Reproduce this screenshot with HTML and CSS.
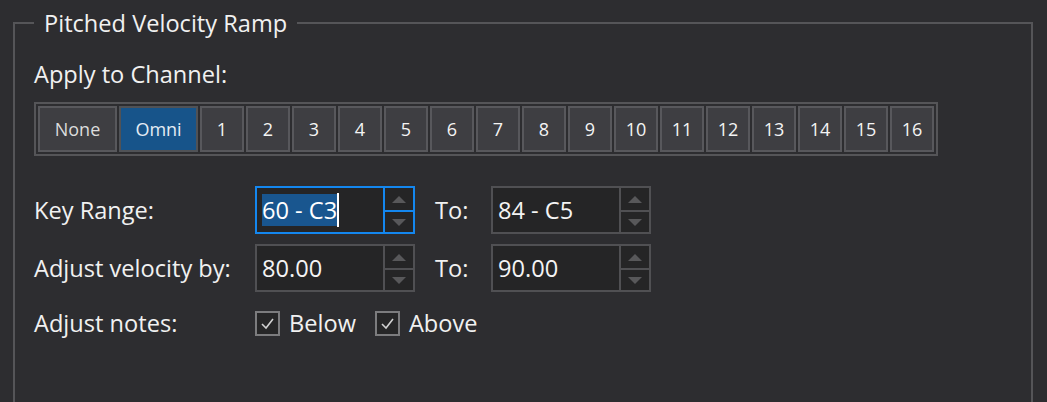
FILE: index.html
```html
<!DOCTYPE html>
<html lang="en">
<head>
<meta charset="utf-8">
<title>Pitched Velocity Ramp</title>
<link rel="stylesheet" href="styles.css">
</head>
<body>
<fieldset class="group">
  <legend class="group-title">Pitched Velocity Ramp</legend>
  <div class="section-label">Apply to Channel:</div>
  <div class="channels">
    <div class="ch ch-wide">None</div>
    <div class="ch ch-wide ch-active">Omni</div>
    <div class="ch">1</div>
    <div class="ch">2</div>
    <div class="ch">3</div>
    <div class="ch">4</div>
    <div class="ch">5</div>
    <div class="ch">6</div>
    <div class="ch">7</div>
    <div class="ch">8</div>
    <div class="ch">9</div>
    <div class="ch">10</div>
    <div class="ch">11</div>
    <div class="ch">12</div>
    <div class="ch">13</div>
    <div class="ch">14</div>
    <div class="ch">15</div>
    <div class="ch">16</div>
  </div>
  <div class="form">
    <div class="form-label">Key Range:</div>
    <div class="spin spin-focus">
      <div class="spin-value"><span class="sel">60 - C3</span><span class="caret"></span></div>
      <div class="spin-btns"><div class="spin-up"><span class="arrow-up"></span></div><div class="spin-down"><span class="arrow-down"></span></div></div>
    </div>
    <div class="to-label">To:</div>
    <div class="spin">
      <div class="spin-value">84 - C5</div>
      <div class="spin-btns"><div class="spin-up"><span class="arrow-up"></span></div><div class="spin-down"><span class="arrow-down"></span></div></div>
    </div>

    <div class="form-label">Adjust velocity by:</div>
    <div class="spin">
      <div class="spin-value">80.00</div>
      <div class="spin-btns"><div class="spin-up"><span class="arrow-up"></span></div><div class="spin-down"><span class="arrow-down"></span></div></div>
    </div>
    <div class="to-label">To:</div>
    <div class="spin">
      <div class="spin-value">90.00</div>
      <div class="spin-btns"><div class="spin-up"><span class="arrow-up"></span></div><div class="spin-down"><span class="arrow-down"></span></div></div>
    </div>

    <div class="form-label">Adjust notes:</div>
    <div class="checks">
      <label class="check">
        <span class="box"><svg width="21" height="21" viewBox="0 0 21 21"><polyline points="5,11 9,15 16,6" fill="none" stroke="#d0d0d0" stroke-width="1.6"/></svg></span>
        <span class="check-text">Below</span>
      </label>
      <label class="check">
        <span class="box"><svg width="21" height="21" viewBox="0 0 21 21"><polyline points="5,11 9,15 16,6" fill="none" stroke="#d0d0d0" stroke-width="1.6"/></svg></span>
        <span class="check-text">Above</span>
      </label>
    </div>
  </div>
</fieldset>
</body>
</html>
```

FILE: styles.css
```css
html, body {
  margin: 0;
  padding: 0;
  background: #2d2d30;
  overflow: hidden;
  height: 402px;
}

body {
  font-family: "Open Sans", "Noto Sans", sans-serif;
  color: #f1f1f1;
}

.group {
  box-sizing: border-box;
  margin: 8px 0 0 13px;
  width: 1020px;
  height: 394px;
  border: 2px solid #555558;
  border-bottom-width: 0;
  padding: 0 0 0 19px;
  min-width: 0;
}

.group-title {
  padding: 0 10px;
  font-size: 23.6px;
  line-height: 30px;
  color: #f1f1f1;
}

.section-label {
  font-size: 23.6px;
  line-height: 30px;
  margin-top: 21px;
}

.channels {
  display: flex;
  gap: 2px;
  width: fit-content;
  margin-top: 13px;
  border: 2px solid #555558;
  padding: 2px;
}

.ch {
  box-sizing: border-box;
  width: 44px;
  height: 46px;
  border: 2px solid #58585c;
  background: #3e3e42;
  display: flex;
  align-items: center;
  justify-content: center;
  font-size: 18px;
  color: #f4f4f4;
}

.ch-wide {
  width: 79px;
  color: #dcdcdc;
}

.ch-active {
  background: #17548a;
  border-color: #505256;
  color: #e4ecf4;
}

.form {
  display: grid;
  grid-template-columns: 221px 160px 76px 160px;
  grid-template-rows: 48px 48px 42px;
  row-gap: 10px;
  margin-top: 30px;
  font-size: 23.6px;
}

.form-label {
  align-self: center;
}

.to-label {
  align-self: center;
  padding-left: 20px;
}

.spin {
  box-sizing: border-box;
  display: flex;
  border: 2px solid #505053;
  background: #252526;
}

.spin-focus {
  border-color: #1487ef;
}

.spin-value {
  flex: 1;
  display: flex;
  align-items: center;
  padding-left: 5px;
  color: #f4f4f4;
}

.sel {
  background: #19568f;
  color: #ffffff;
  line-height: 32px;
}

.caret {
  width: 2px;
  height: 34px;
  background: #ffffff;
}

.spin-btns {
  box-sizing: border-box;
  width: 30px;
  border-left: 2px solid #505053;
  display: flex;
  flex-direction: column;
}

.spin-focus .spin-btns,
.spin-focus .spin-up {
  border-color: #1487ef;
}

.spin-up {
  height: 22px;
  border-bottom: 2px solid #505053;
  display: flex;
  align-items: center;
  justify-content: center;
}

.spin-down {
  flex: 1;
  display: flex;
  align-items: center;
  justify-content: center;
}

.arrow-up {
  width: 0;
  height: 0;
  border-left: 7px solid transparent;
  border-right: 7px solid transparent;
  border-bottom: 7px solid #58585a;
}

.arrow-down {
  width: 0;
  height: 0;
  border-left: 7px solid transparent;
  border-right: 7px solid transparent;
  border-top: 7px solid #58585a;
}

.checks {
  grid-column: 2 / 5;
  display: flex;
  align-items: center;
  gap: 19px;
}

.check {
  display: flex;
  align-items: center;
  gap: 9px;
}

.box {
  box-sizing: border-box;
  width: 25px;
  height: 25px;
  border: 2px solid #7c7c7e;
  background: #262627;
  display: flex;
}
```
